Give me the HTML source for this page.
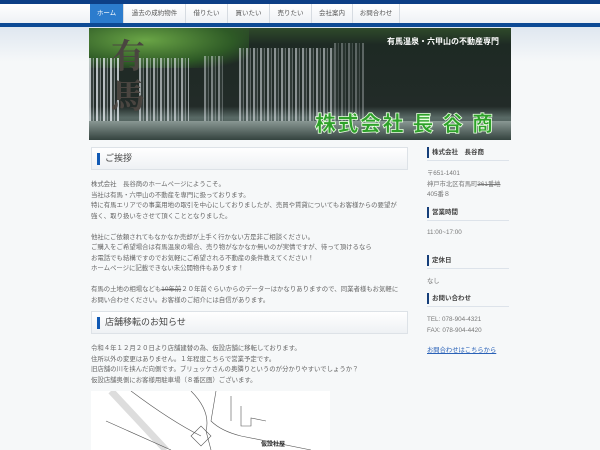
<!DOCTYPE html>
<html><head><meta charset="utf-8"><style>
*{margin:0;padding:0;box-sizing:border-box}
body{width:600px;height:450px;overflow:hidden;background:#f6f8f9;font-family:"Liberation Sans","Noto Sans CJK JP",sans-serif;color:#666;position:relative}
.top{position:absolute;left:0;top:0;width:600px;height:4px;background:#0d3f86}
.nav{position:absolute;left:0;top:4px;width:600px;height:19px;background:linear-gradient(#fff,#eef1f5)}
.navline{position:absolute;left:0;top:23px;width:600px;height:4px;background:#0d4a95}
.bgg{position:absolute;left:0;top:27px;width:600px;height:35px;background:linear-gradient(#dfe7f0,#f6f8f9)}
.tab{position:absolute;top:4px;height:19px;font-size:6.5px;line-height:19px;text-align:center;color:#555;border-right:1px solid #d6dbe1}
.tab.on{background:#2c7ccd;color:#fff}
.hdr{position:absolute;left:89px;top:28px;width:422px;height:112px;overflow:hidden;background:linear-gradient(180deg,#2f4a2a 0%,#1e2a24 15%,#222b28 70%,#596a66 80%,#3e4c48 100%)}
.fall{position:absolute;top:15px;height:80px;background:repeating-linear-gradient(90deg,rgba(235,240,245,.75) 0 2px,rgba(120,130,130,.25) 2px 4px,rgba(220,225,230,.5) 4px 5px,rgba(40,50,50,.2) 5px 7px)}
.h1{position:absolute;left:91px;width:317px;height:23px;background:linear-gradient(#fff,#eef1f4);border:1px solid #dde2e7;font-size:9px;line-height:21px;padding-left:13px;color:#444}
.h1:before{content:"";position:absolute;left:5px;top:5px;width:3px;height:12px;background:#1059b4}
.p{position:absolute;left:91px;font-size:6.4px;line-height:10.5px;color:#666;white-space:nowrap}
.sh{position:absolute;left:427px;width:82px;height:15px;font-size:6.5px;line-height:13px;padding-left:5px;color:#444;border-bottom:1px solid #dde3ea;font-weight:bold}
.sh:before{content:"";position:absolute;left:0;top:1px;width:2px;height:11px;background:#163f7a}
.s{position:absolute;left:427px;font-size:6.3px;line-height:10.5px;color:#777;white-space:nowrap}
</style></head><body>
<div class="top"></div><div class="nav"></div><div class="navline"></div><div class="bgg"></div>
<div class="tab on" style="left:90px;width:34px">ホーム</div>
<div class="tab" style="left:124px;width:62px">過去の成約物件</div>
<div class="tab" style="left:186px;width:42px">借りたい</div>
<div class="tab" style="left:228px;width:42px">買いたい</div>
<div class="tab" style="left:270px;width:42px">売りたい</div>
<div class="tab" style="left:312px;width:41px">会社案内</div>
<div class="tab" style="left:353px;width:47px">お問合わせ</div>
<div class="hdr">
<div style="position:absolute;left:0;top:0;width:160px;height:40px;background:radial-gradient(ellipse at 35% 30%,#6aa546,#2e5a26 60%,transparent 85%)"></div>
<div class="fall" style="left:0;width:30px;top:30px;height:65px"></div>
<div class="fall" style="left:50px;width:50px;top:30px;height:65px;opacity:.8"></div>
<div class="fall" style="left:115px;width:20px;top:28px;opacity:.6"></div>
<div class="fall" style="left:150px;width:95px;top:20px;opacity:.7"></div>
<div class="fall" style="left:245px;width:30px;top:15px;opacity:.4"></div>
<div style="position:absolute;left:0;top:93px;width:422px;height:19px;background:linear-gradient(#8a9894,#34433f)"></div>
<div style="position:absolute;left:22px;top:6px;font-family:'Noto Serif CJK SC',serif;font-size:34px;line-height:40px;color:#4a4540;font-weight:bold;width:40px">有<br>馬</div>
<div style="position:absolute;right:12px;top:8px;font-size:8px;color:#fff;font-weight:bold">有馬温泉・六甲山の不動産専門</div>
<div style="position:absolute;left:226px;top:80px;font-size:21px;color:#2ea12a;font-weight:900;letter-spacing:1.5px;-webkit-text-stroke:.8px #e8ffe0;white-space:nowrap">株式会社 長 谷 商</div>
</div>
<div class="h1" style="top:147px">ご挨拶</div>
<div class="p" style="top:180px">株式会社　長谷商のホームページにようこそ。<br>当社は有馬・六甲山の不動産を専門に扱っております。<br>特に有馬エリアでの事業用地の取引を中心にしておりましたが、売買や賃貸についてもお客様からの要望が<br>強く、取り扱いをさせて頂くこととなりました。<br><br>他社にご依頼されてもなかなか売却が上手く行かない方是非ご相談ください。<br>ご購入をご希望場合は有馬温泉の場合、売り物がなかなか無いのが実情ですが、待って頂けるなら<br>お電話でも結構ですのでお気軽にご希望される不動産の条件教えてください！<br>ホームページに記載できない未公開物件もあります！<br><br>有馬の土地の相場なども<s>10年前</s>２０年前ぐらいからのデーターはかなりありますので、同業者様もお気軽に<br>お問い合わせください。お客様のご紹介には自信があります。</div>
<div class="h1" style="top:311px">店舗移転のお知らせ</div>
<div class="p" style="top:344px">令和４年１２月２０日より店舗建替の為、仮設店舗に移転しております。<br>住所以外の変更はありません。１年程度こちらで営業予定です。<br>旧店舗の川を挟んだ向側です。ブリュッケさんの奥隣りというのが分かりやすいでしょうか？<br>仮設店舗奥側にお客様用駐車場（８番区画）ございます。</div>
<div style="position:absolute;left:91px;top:391px;width:239px;height:59px;background:#fff">
<svg width="239" height="59" style="position:absolute;left:0;top:0" fill="none" stroke="#555" stroke-width=".6">
<path d="M20 0 L75 59" stroke="#ddd" stroke-width="7"/>
<path d="M40 0 Q80 30 110 45 M15 30 Q60 50 80 59 M100 0 Q120 20 115 40 L120 59 M125 0 L120 30 Q130 40 150 45 L220 59 M140 5 L140 30 M150 15 L150 35 L160 35 L160 27 L175 30 M100 45 L110 35 L120 45 L110 55Z"/>
<text x="170" y="55" font-size="6" fill="#222" stroke="none" font-weight="bold">仮設社屋</text>
</svg></div>
<div class="sh" style="top:146px">株式会社　長谷商</div>
<div class="s" style="top:169px">〒651-1401<br>神戸市北区有馬町<s>361番地</s><br>405番８</div>
<div class="sh" style="top:206px">営業時間</div>
<div class="s" style="top:228px">11:00~17:00</div>
<div class="sh" style="top:254px">定休日</div>
<div class="s" style="top:277px">なし</div>
<div class="sh" style="top:292px">お問い合わせ</div>
<div class="s" style="top:315px">TEL: 078-904-4321<br>FAX: 078-904-4420</div>
<div class="s" style="top:346px;color:#2a62b8;text-decoration:underline">お問合わせはこちらから</div>
</body></html>
